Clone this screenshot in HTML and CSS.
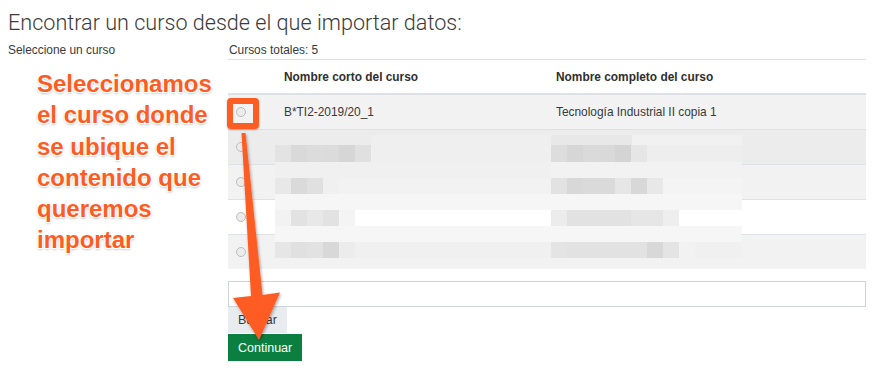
FILE: index.html
```html
<!DOCTYPE html>
<html lang="es">

<head>
    <meta charset="UTF-8">
    <meta name="viewport" content="width=device-width, initial-scale=1.0">
    <title>Importar curso</title>
    <link rel="stylesheet" href="styles.css">
</head>

<body>

    <div id="page">
        <h2 class="pageTitle">Encontrar un curso desde el que importar datos:</h2>

        <div class="importRow">
            <div class="importLabel">Seleccione un curso</div>

            <div class="importMain">
                <div class="totalCount">Cursos totales: 5</div>

                <table class="courseTable">
                    <thead>
                        <tr>
                            <th class="colRadio"></th>
                            <th class="colShort">Nombre corto del curso</th>
                            <th>Nombre completo del curso</th>
                        </tr>
                    </thead>
                    <tbody>
                        <tr>
                            <td class="colRadio"><span class="radio"></span></td>
                            <td>B*TI2-2019/20_1</td>
                            <td>Tecnología Industrial II copia 1</td>
                        </tr>
                        <tr class="hovered">
                            <td class="colRadio"><span class="radio"></span></td>
                            <td></td>
                            <td></td>
                        </tr>
                        <tr>
                            <td class="colRadio"><span class="radio"></span></td>
                            <td></td>
                            <td></td>
                        </tr>
                        <tr>
                            <td class="colRadio"><span class="radio"></span></td>
                            <td></td>
                            <td></td>
                        </tr>
                        <tr>
                            <td class="colRadio"><span class="radio"></span></td>
                            <td></td>
                            <td></td>
                        </tr>
                    </tbody>
                </table>

                <input type="text" class="searchBox">
                <button class="btnSearch">Buscar</button>
                <button class="btnContinue">Continuar</button>
            </div>
        </div>
    </div>

    <!-- pixelated blur over the hidden course names -->
    <div class="blurPatch">
        <div class="pr pA"></div>
        <div class="pr pB"></div>
        <div class="pr pC"></div>
        <div class="pr pD"></div>
        <div class="pr pE"></div>
        <div class="pr pF"></div>
        <div class="pr pG"></div>
        <div class="pr pH"></div>
        <div class="pr pI"></div>
    </div>

    <!-- annotation -->
    <div class="note">Seleccionamos<br>el curso donde<br>se ubique el<br>contenido que<br>queremos<br>importar</div>

    <div class="markBox"></div>

    <svg class="arrow" width="875" height="371" viewBox="0 0 875 371">
        <defs>
            <filter id="arrowShadow" x="-50%" y="-10%" width="200%" height="120%">
                <feDropShadow dx="1" dy="1.5" stdDeviation="1.5" flood-color="#000" flood-opacity="0.35" />
            </filter>
        </defs>
        <polygon points="241.5,133 245.5,133 262.5,295 280,292.5 259,340 233,298 251,296"
            fill="#fe5c24" filter="url(#arrowShadow)" />
    </svg>

</body>

</html>
```

FILE: styles.css
```css
body {
    margin: 0;
    padding: 0;
    background-color: #fff;
    font-family: 'Liberation Sans', Arial, sans-serif;
    color: #373a3c;
    width: 875px;
    height: 371px;
    overflow: hidden;
    position: relative;
}

#page {
    padding: 8px 0 0 8px;
}

.pageTitle {
    font-family: Roboto, 'Liberation Sans', sans-serif;
    font-weight: 300;
    font-size: 21.6px;
    line-height: 30px;
    margin: 0 0 5px 0;
    color: #3a3a3a;
}

.importRow {
    display: flex;
}

.importLabel {
    width: 220px;
    font-size: 11.9px;
    line-height: 14px;
}

.importMain {
    width: 638px;
    display: flex;
    flex-direction: column;
    align-items: flex-start;
}

.totalCount {
    font-size: 11.9px;
    line-height: 14px;
    padding-left: 1px;
    margin-bottom: 2px;
}

.courseTable {
    width: 638px;
    border-collapse: collapse;
    font-size: 11.9px;
    table-layout: fixed;
}

.courseTable th {
    text-align: left;
    font-weight: bold;
    height: 33px;
    padding: 0 12px;
    border-top: 1px solid #dee2e6;
    border-bottom: 2px solid #dee2e6;
    color: #2f2f2f;
}

.courseTable td {
    height: 35px;
    padding: 0 12px;
    border-top: 1px solid #dee2e6;
    box-sizing: border-box;
}

.courseTable .colRadio {
    width: 44px;
    padding: 0 0 0 8px;
    box-sizing: border-box;
}

.courseTable .colShort {
    width: 272px;
    box-sizing: border-box;
}

.courseTable tbody tr:nth-child(odd) {
    background-color: #f2f2f2;
}

.courseTable tbody tr.hovered {
    background-color: #ececec;
}

.radio {
    display: block;
    width: 8px;
    height: 8px;
    border: 1px solid #bdbdbd;
    border-radius: 50%;
    background-color: #ececec;
}

.searchBox {
    width: 638px;
    height: 26px;
    box-sizing: border-box;
    margin: 12px 0 0 0;
    border: 1px solid #ced4da;
    padding: 0 8px;
}

.btnSearch,
.btnContinue {
    border: none;
    font-family: 'Liberation Sans', Arial, sans-serif;
    font-size: 12.5px;
    padding: 0 10px;
    margin: 0;
}

.btnSearch {
    height: 26px;
    background-color: #e9ecef;
    color: #373a3c;
}

.btnContinue {
    height: 27px;
    margin-top: 1px;
    background-color: #0a7f3f;
    color: #fff;
}

/* blurred course names */
.blurPatch {
    position: absolute;
    left: 275px;
    top: 135px;
    width: 467px;
}

.pr {
    height: 16px;
}

.pA {
    height: 10px;
    background: linear-gradient(90deg, #ececec 0 96px, #efefef 96px 276px, #e8e8e8 276px 357px, #f1f1f1 357px);
}

.pB {
    height: 17px;
    background: linear-gradient(90deg, #e3e3e3 0 16px, #d9d9d9 16px 32px, #dcdcdc 32px 48px, #dbdbdb 48px 64px, #d6d6d6 64px 80px, #e0e0e0 80px 96px, #efefef 96px 276px, #dddddd 276px 292px, #d6d6d6 292px 308px, #dadada 308px 324px, #d9d9d9 324px 340px, #d4d4d4 340px 356px, #e6e6e6 356px 372px, #eeeeee 372px);
}

.pC {
    background: linear-gradient(90deg, #f0f0f0 0 276px, #f2f2f2 276px);
}

.pD {
    background: linear-gradient(90deg, #e8e8e8 0 16px, #dadada 16px 32px, #e0e0e0 32px 48px, #f0f0f0 48px 64px, #f2f2f2 64px 276px, #e2e2e2 276px 292px, #d8d8d8 292px 308px, #dadada 308px 340px, #e6e6e6 340px 356px, #d8d8d8 356px 372px, #e8e8e8 372px 388px, #f4f4f4 388px);
}

.pE {
    background-color: #f6f6f6;
}

.pF {
    background: linear-gradient(90deg, #f2f2f2 0 16px, #e2e2e2 16px 32px, #e8e8e8 32px 48px, #e2e2e2 48px 64px, #f4f4f4 64px 80px, #fff 80px 276px, #ececec 276px 292px, #e2e2e2 292px 356px, #e6e6e6 356px 388px, #eeeeee 388px 404px, #fff 404px);
}

.pG {
    background-color: #f6f6f6;
}

.pH {
    background: linear-gradient(90deg, #e6e6e6 0 16px, #e0e0e0 16px 32px, #e2e2e2 32px 48px, #d8d8d8 48px 64px, #ececec 64px 80px, #f0f0f0 80px 276px, #e4e4e4 276px 292px, #e2e2e2 292px 372px, #d8d8d8 372px 388px, #e4e4e4 388px 404px, #f2f2f2 404px 420px, #f0f0f0 420px);
}

.pI {
    height: 10px;
    background-color: #f2f2f2;
}

/* annotation on top */
.note {
    position: absolute;
    left: 37px;
    top: 68px;
    font-family: 'Liberation Sans', Arial, sans-serif;
    font-weight: bold;
    font-size: 24px;
    line-height: 31.3px;
    color: #fd5c22;
    text-shadow: -1px -1px 0 #fff, 1px -1px 0 #fff, -1px 1px 0 #fff, 1px 1px 0 #fff,
        0 1px 3px rgba(0, 0, 0, 0.45);
}

.markBox {
    position: absolute;
    left: 227px;
    top: 98px;
    width: 20px;
    height: 19px;
    border: 6px solid #fd5c22;
    border-radius: 4px;
    box-shadow: 0 1px 2px rgba(0, 0, 0, 0.3);
}

.arrow {
    position: absolute;
    left: 0;
    top: 0;
    pointer-events: none;
}
```
